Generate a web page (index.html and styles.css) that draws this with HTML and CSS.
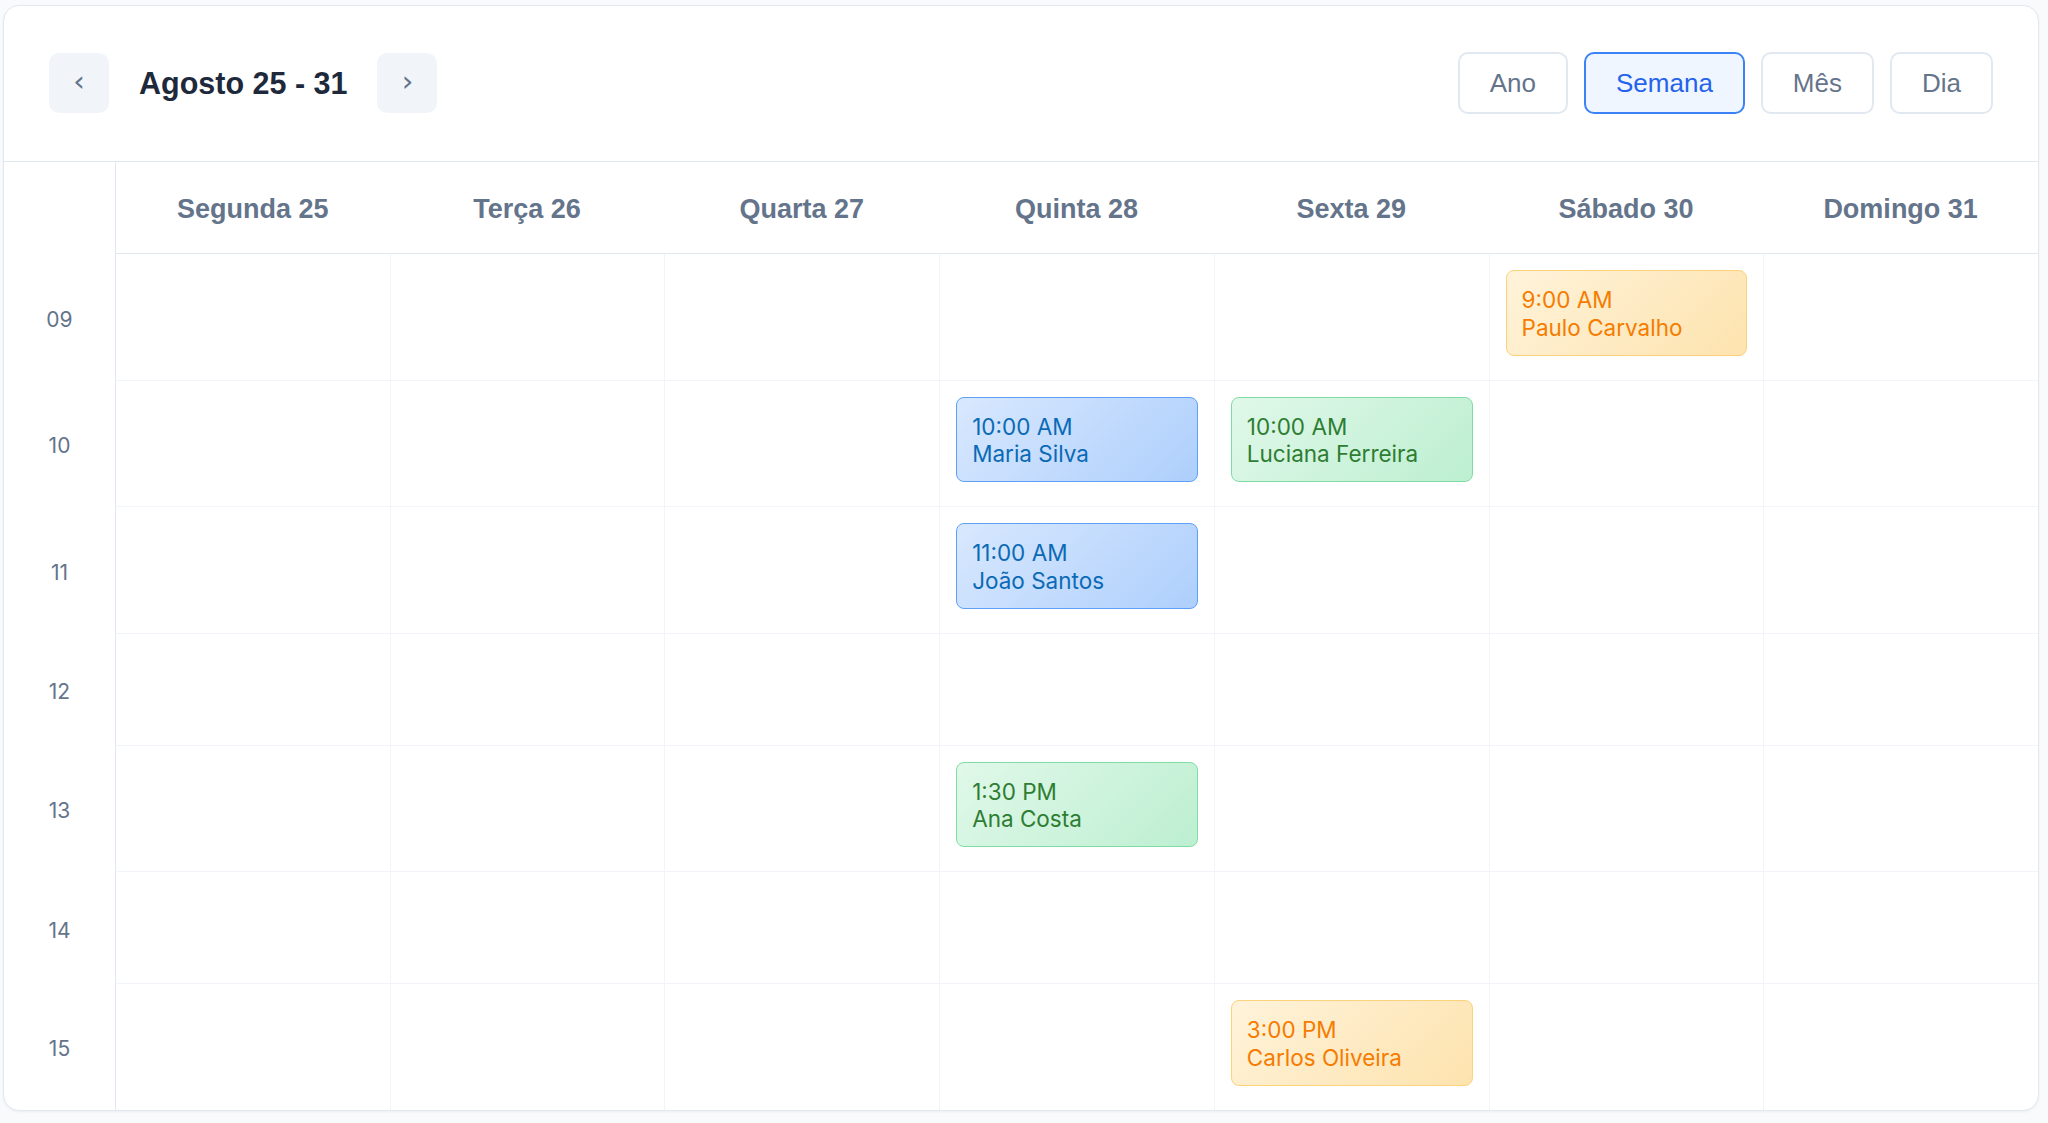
FILE: index.html
```html
<!DOCTYPE html>
<html lang="pt">
<head>
<meta charset="utf-8">
<title>Agenda semanal</title>
<link rel="stylesheet" href="styles.css">
</head>
<body>
<div class="card">
  <header class="toolbar">
    <div class="nav">
      <button class="nav-btn">‹</button>
      <h1 class="title">Agosto 25 - 31</h1>
      <button class="nav-btn">›</button>
    </div>
    <div class="views">
      <button class="view-btn">Ano</button>
      <button class="view-btn active">Semana</button>
      <button class="view-btn">Mês</button>
      <button class="view-btn">Dia</button>
    </div>
  </header>

  <div class="grid">
    <div class="corner"></div>
    <div class="day-head first">Segunda 25</div>
    <div class="day-head">Terça 26</div>
    <div class="day-head">Quarta 27</div>
    <div class="day-head">Quinta 28</div>
    <div class="day-head">Sexta 29</div>
    <div class="day-head">Sábado 30</div>
    <div class="day-head">Domingo 31</div>

    <!-- 09 -->
    <div class="time">09</div>
    <div class="cell first"></div><div class="cell"></div><div class="cell"></div><div class="cell"></div><div class="cell"></div>
    <div class="cell"><div class="event orange"><span>9:00 AM</span><span>Paulo Carvalho</span></div></div>
    <div class="cell"></div>

    <!-- 10 -->
    <div class="time">10</div>
    <div class="cell first"></div><div class="cell"></div><div class="cell"></div>
    <div class="cell"><div class="event blue"><span>10:00 AM</span><span>Maria Silva</span></div></div>
    <div class="cell"><div class="event green"><span>10:00 AM</span><span>Luciana Ferreira</span></div></div>
    <div class="cell"></div><div class="cell"></div>

    <!-- 11 -->
    <div class="time">11</div>
    <div class="cell first"></div><div class="cell"></div><div class="cell"></div>
    <div class="cell"><div class="event blue"><span>11:00 AM</span><span>João Santos</span></div></div>
    <div class="cell"></div><div class="cell"></div><div class="cell"></div>

    <!-- 12 -->
    <div class="time">12</div>
    <div class="cell first"></div><div class="cell"></div><div class="cell"></div><div class="cell"></div><div class="cell"></div><div class="cell"></div><div class="cell"></div>

    <!-- 13 -->
    <div class="time">13</div>
    <div class="cell first"></div><div class="cell"></div><div class="cell"></div>
    <div class="cell"><div class="event green"><span>1:30 PM</span><span>Ana Costa</span></div></div>
    <div class="cell"></div><div class="cell"></div><div class="cell"></div>

    <!-- 14 -->
    <div class="time">14</div>
    <div class="cell first"></div><div class="cell"></div><div class="cell"></div><div class="cell"></div><div class="cell"></div><div class="cell"></div><div class="cell"></div>

    <!-- 15 -->
    <div class="time">15</div>
    <div class="cell first last"></div><div class="cell last"></div><div class="cell last"></div><div class="cell last"></div>
    <div class="cell last"><div class="event orange"><span>3:00 PM</span><span>Carlos Oliveira</span></div></div>
    <div class="cell last"></div><div class="cell last"></div>
  </div>
</div>
</body>
</html>
```

FILE: styles.css
```css
* { box-sizing: border-box; }

html, body {
  margin: 0;
  padding: 0;
  background: #f8fafc;
}

body {
  font-family: "Liberation Sans", Arial, sans-serif;
  color: #1e293b;
}

.card {
  margin: 5px 9px 10px 3px;
  background: #ffffff;
  border: 1px solid #e2e8f0;
  border-radius: 16px;
  overflow: hidden;
  box-shadow: 0 1px 3px rgba(15, 23, 42, 0.05);
}

.toolbar {
  display: flex;
  align-items: center;
  justify-content: space-between;
  padding: 46px 45px 47px 45px;
  border-bottom: 1px solid #e2e8f0;
}

.nav {
  display: flex;
  align-items: center;
  gap: 30px;
}

.nav-btn {
  width: 60px;
  height: 60px;
  border: none;
  border-radius: 10px;
  background: #f1f5f9;
  color: #64748b;
  font-family: "DejaVu Sans", sans-serif;
  font-size: 29px;
  line-height: 1;
  padding: 0 0 3px 0;
}

.title {
  margin: 0;
  font-size: 30.5px;
  font-weight: 700;
  color: #1e293b;
  letter-spacing: 0;
}

.views {
  display: flex;
  gap: 16px;
}

.view-btn {
  height: 62px;
  padding: 0 30px;
  border: 2px solid #e2e8f0;
  border-radius: 10px;
  background: #ffffff;
  color: #64748b;
  font-family: "Liberation Sans", Arial, sans-serif;
  font-size: 26px;
}

.view-btn.active {
  border-color: #3b82f6;
  background: #eff6ff;
  color: #2563eb;
}

.grid {
  display: grid;
  grid-template-columns: 111px repeat(7, 1fr);
}

.day-head {
  height: 92px;
  display: flex;
  align-items: center;
  justify-content: center;
  border-bottom: 1px solid #e2e8f0;
  font-size: 27px;
  font-weight: 700;
  color: #64748b;
  padding-top: 3px;
}

.day-head.first {
  border-left: 1px solid #e2e8f0;
}

.time {
  display: flex;
  align-items: center;
  justify-content: center;
  font-family: Inter, "Liberation Sans", sans-serif;
  font-size: 21px;
  color: #64748b;
  padding-top: 4px;
}

.cell {
  min-height: 112px;
  padding: 16px;
  border-left: 1px solid #f1f5f9;
  border-bottom: 1px solid #f1f5f9;
}

.cell.first {
  border-left-color: #e2e8f0;
}

.cell.last {
  border-bottom: none;
  min-height: 111px;
}

.event {
  display: flex;
  flex-direction: column;
  height: 85.5px;
  margin-bottom: 8px;
  padding: 15px 15px 14px;
  border: 1px solid;
  border-radius: 8px;
  font-family: Inter, "Liberation Sans", sans-serif;
  font-size: 22.5px;
  line-height: 27.5px;
}

.event.blue {
  background: linear-gradient(135deg, #d8e8fe 0%, #aecffc 100%);
  border-color: #5ea0f8;
  color: #0b6ab5;
}

.event.green {
  background: linear-gradient(135deg, #e0f8e9 0%, #bdefd1 100%);
  border-color: #7fdda3;
  color: #2e7d32;
}

.event.orange {
  background: linear-gradient(135deg, #fff3da 0%, #fde3ae 100%);
  border-color: #fcd27a;
  color: #f57c00;
}
```
